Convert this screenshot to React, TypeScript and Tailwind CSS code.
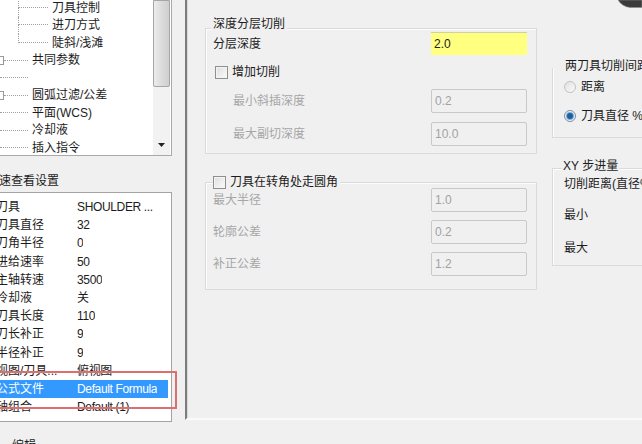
import React from 'react'

type TreeRow = { label: string; level: 1 | 2; box?: boolean; last?: boolean }

const treeRows: TreeRow[] = [
  { label: '刀具控制', level: 2 },
  { label: '进刀方式', level: 2 },
  { label: '陡斜/浅滩', level: 2, last: true },
  { label: '共同参数', level: 1, box: true },
  { label: '', level: 1 },
  { label: '圆弧过滤/公差', level: 1, box: true },
  { label: '平面(WCS)', level: 1 },
  { label: '冷却液', level: 1 },
  { label: '插入指令', level: 1 },
]

const quickProps: [string, string][] = [
  ['刀具', 'SHOULDER ...'],
  ['刀具直径', '32'],
  ['刀角半径', '0'],
  ['进给速率', '50'],
  ['主轴转速', '3500'],
  ['冷却液', '关'],
  ['刀具长度', '110'],
  ['刀长补正', '9'],
  ['半径补正', '9'],
  ['视图/刀具...', '俯视图'],
  ['公式文件', 'Default Formula'],
  ['轴组合', 'Default (1)'],
]

function Checkbox() {
  return (
    <span className="w-[13px] h-[13px] shrink-0 border border-[#8f8f8f] bg-gradient-to-br from-[#dedede] to-[#fbfbfb] shadow-[inset_0_0_0_1px_#f4f4f4]" />
  )
}

function Radio({ checked }: { checked?: boolean }) {
  return (
    <span
      className={`w-[12px] h-[12px] shrink-0 rounded-full border flex items-center justify-center ${
        checked ? 'border-[#7c8fa0] bg-[#eef3f8]' : 'border-[#c2c2c2] bg-gradient-to-br from-[#e2e2e2] to-[#fafafa]'
      }`}
    >
      {checked && <span className="w-[6px] h-[6px] rounded-full bg-[#1f5f9c] shadow-[0_0_0_1px_#7fb0d8]" />}
    </span>
  )
}

function Field({ value, yellow }: { value: string; yellow?: boolean }) {
  if (yellow) {
    return (
      <div className="w-[96px] h-[23px] bg-[#ffff80] border-t border-[#cfcfa8] pl-[3px] flex items-center text-[#222]">
        {value}
      </div>
    )
  }
  return (
    <div className="w-[96px] h-[24px] rounded-[2px] border border-[#c9c9c9] bg-[#f0f0f0] pl-[3px] flex items-center text-[#a2a2a2]">
      {value}
    </div>
  )
}

function TreePane() {
  return (
    <div className="w-[172px] h-[156px] bg-white border-r border-b border-[#a9a9a9] pr-[1px] flex">
      <div className="w-[153px] overflow-hidden -mt-[1px]">
        {treeRows.map((r, i) =>
          r.level === 2 ? (
            <div key={i} className="h-[17.5px] flex items-stretch">
              <span className="w-[18px] shrink-0" />
              <span className="w-[30px] shrink-0 flex flex-col">
                <span className="h-1/2 border-l border-b border-dotted border-[#a0a0a0]" />
                <span className={`h-1/2 ${r.last ? '' : 'border-l border-dotted border-[#a0a0a0]'}`} />
              </span>
              <span className="ml-[4px] self-center whitespace-nowrap">{r.label}</span>
            </div>
          ) : (
            <div key={i} className="h-[17.5px] flex items-center">
              {r.box ? (
                <>
                  <span className="w-[9px] h-[9px] -ml-[5px] shrink-0 border border-[#9a9a9a] bg-white" />
                  <span className="w-[24px] shrink-0 border-t border-dotted border-[#a0a0a0]" />
                </>
              ) : (
                <span className="w-[28px] shrink-0 border-t border-dotted border-[#a0a0a0]" />
              )}
              <span className="ml-[4px] whitespace-nowrap">{r.label}</span>
            </div>
          )
        )}
      </div>
      <div className="w-[17px] shrink-0 bg-[#f2f2f2] flex flex-col">
        <div className="h-[87px] border border-[#a6a6a6] rounded-b-[2px] bg-gradient-to-r from-[#ececec] via-[#dcdcdc] to-[#cfcfcf]" />
        <div className="flex-1" />
        <div className="h-[20px] flex items-center justify-center">
          <svg width="7" height="4" viewBox="0 0 7 4">
            <path d="M0 0 L7 0 L3.5 4 Z" fill="#222" />
          </svg>
        </div>
      </div>
    </div>
  )
}

function LeftPane() {
  return (
    <div className="w-[185px] shrink-0 relative overflow-hidden">
      <TreePane />
      <div className="mt-[17px] h-[16px] -ml-[13px] whitespace-nowrap">快速查看设置</div>
      <div className="mt-[3px] w-[172px] h-[230px] bg-white border-t border-r border-b border-[#a3a3a3] pt-[5px] pr-[3px]">
        {quickProps.map(([k, v], i) => (
          <div
            key={k}
            className={`h-[18.2px] flex items-center whitespace-nowrap ${i === 10 ? 'bg-[#3399ff] text-white' : ''}`}
          >
            <span className="w-[81px] -ml-[4px] shrink-0 overflow-hidden">{k}</span>
            <span className="truncate tracking-[-0.35px]">{v}</span>
          </div>
        ))}
      </div>
      <div className="mt-[16px] ml-[12px] whitespace-nowrap">编辑</div>
      <div className="absolute left-[-3px] top-[371px] w-[180px] h-[38px] border-2 border-[#dc7070] pointer-events-none" />
    </div>
  )
}

export default function App() {
  return (
    <div className="w-[642px] h-[444px] overflow-hidden bg-[#f0f0f0] flex text-[12px] leading-[16px] text-[#1c1c1c] font-['Liberation_Sans','Noto_Sans_CJK_SC',sans-serif]">
      <LeftPane />
      <div className="flex-1 min-w-0 flex flex-col">
        <div className="h-[420px] relative border-l-2 border-[#7d7d7d] border-b-2 border-b-[#fafafa] shadow-[inset_1px_0_0_#d8d8d8] pl-[18px] pt-[28px] flex gap-[15px] overflow-hidden">
          <svg className="absolute top-0 right-0" width="24" height="9" viewBox="0 0 24 9">
            <path d="M0 0 L24 0 L24 7.5 L12 7.5 Q4 6.5 0 0 Z" fill="#3b3b3b" stroke="#8a8a8a" strokeWidth="0.6" />
          </svg>

          <div className="w-[332px] shrink-0 flex flex-col">
            <div className="h-[126px] border border-[#dadada] shadow-[inset_1px_1px_0_#fdfdfd] pl-[7px] pr-[9px]">
              <div className="-mt-[12px] -ml-[2px] h-[15px] leading-[15px] px-[2px] w-fit bg-[#f0f0f0]">深度分层切削</div>
              <div className="h-[23px] flex items-center justify-between">
                <span>分层深度</span>
                <Field value="2.0" yellow />
              </div>
              <div className="mt-[9px] h-[16px] flex items-center gap-[4px] -ml-[5px] pl-[7px]">
                <Checkbox />
                <span>增加切削</span>
              </div>
              <div className="mt-[9px] h-[24px] flex items-center justify-between">
                <span className="ml-[20px] text-[#a6a6a6]">最小斜插深度</span>
                <Field value="0.2" />
              </div>
              <div className="mt-[9px] h-[24px] flex items-center justify-between">
                <span className="ml-[20px] text-[#a6a6a6]">最大副切深度</span>
                <Field value="10.0" />
              </div>
            </div>

            <div className="mt-[28px] h-[108px] border border-[#dadada] shadow-[inset_1px_1px_0_#fdfdfd] pl-[7px] pr-[9px]">
              <div className="-mt-[8px] h-[14px] flex items-center gap-[4px] w-fit pr-[2px] bg-[#f0f0f0]">
                <Checkbox />
                <span>刀具在转角处走圆角</span>
              </div>
              <div className="-mt-[1px] h-[24px] flex items-center justify-between">
                <span className="text-[#a6a6a6]">最大半径</span>
                <Field value="1.0" />
              </div>
              <div className="mt-[8px] h-[24px] flex items-center justify-between">
                <span className="text-[#a6a6a6]">轮廓公差</span>
                <Field value="0.2" />
              </div>
              <div className="mt-[8px] h-[24px] flex items-center justify-between">
                <span className="text-[#a6a6a6]">补正公差</span>
                <Field value="1.2" />
              </div>
            </div>
          </div>

          <div className="w-[200px] shrink-0 flex flex-col pt-[40px]">
            <div className="h-[70px] border-l border-b border-[#dadada] shadow-[inset_1px_0_0_#fdfdfd] pl-[11px]">
              <div className="-mt-[10px] h-[16px] w-fit px-[1px] bg-[#f0f0f0] whitespace-nowrap">两刀具切削间距</div>
              <div className="mt-[5px] h-[16px] flex items-center gap-[5px]">
                <Radio />
                <span>距离</span>
              </div>
              <div className="mt-[13px] h-[16px] flex items-center gap-[5px] whitespace-nowrap">
                <Radio checked />
                <span>刀具直径 %</span>
              </div>
            </div>

            <div className="mt-[30px] h-[98px] border border-[#dadada] shadow-[inset_1px_1px_0_#fdfdfd] pl-[11px]">
              <div className="-mt-[11px] -ml-[2px] h-[16px] w-fit px-[1px] bg-[#f0f0f0] whitespace-nowrap">XY 步进量</div>
              <div className="mt-[2px] h-[16px] whitespace-nowrap">切削距离(直径%)</div>
              <div className="mt-[15px] h-[16px]">最小</div>
              <div className="mt-[17px] h-[16px]">最大</div>
            </div>
          </div>
        </div>
      </div>
    </div>
  )
}
